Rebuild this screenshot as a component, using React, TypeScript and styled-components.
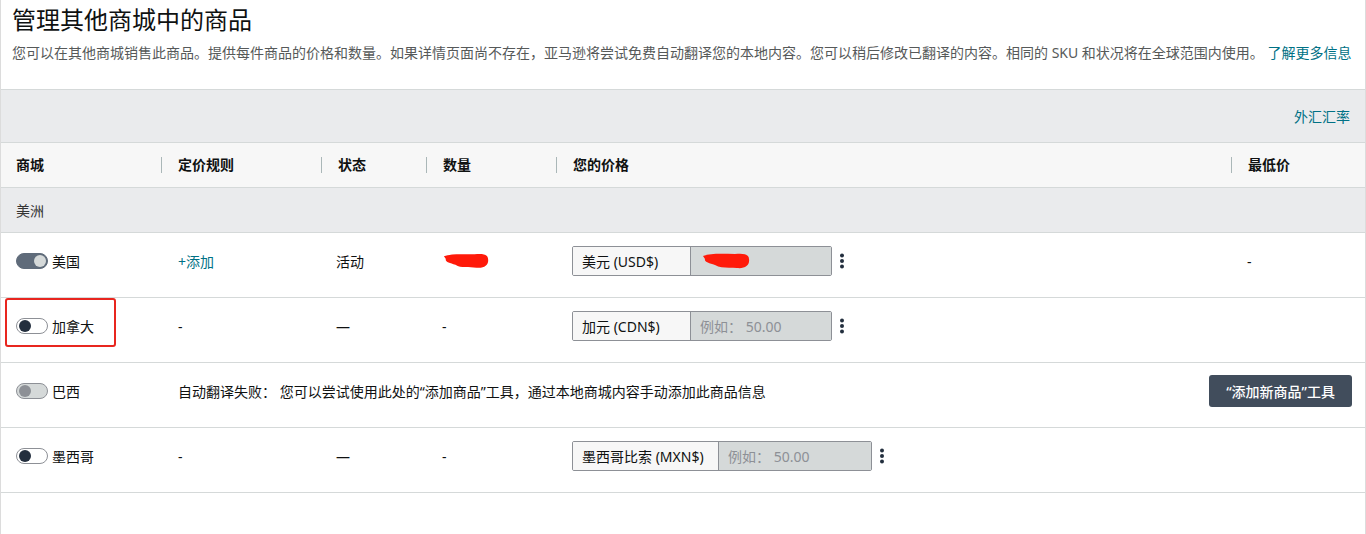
import styled, { createGlobalStyle } from "styled-components";

const GlobalStyle = createGlobalStyle`
  body {
    margin: 0;
    background: #fff;
    font-family: "Noto Sans", "Noto Sans CJK SC", sans-serif;
    color: #0f1111;
  }
`;

const COLS = "160px 160px 105px 130px 1fr 134px";

type Toggle = "on" | "off" | "disabled";

type Market = {
  name: string,
  toggle: Toggle,
  rule?: string,
  status?: string,
  qty?: string,
  currency?: string,
  leftW?: number,
  rightW?: number,
  redacted?: boolean,
  low?: string,
  failed?: boolean,
  flagged?: boolean,
};

const markets: Market[] = [
  { name: "美国", toggle: "on", rule: "+添加", status: "活动", currency: "美元 (USD$)", leftW: 118, rightW: 140, redacted: true, low: "-" },
  { name: "加拿大", toggle: "off", rule: "-", status: "—", qty: "-", currency: "加元 (CDN$)", leftW: 118, rightW: 140, flagged: true },
  { name: "巴西", toggle: "disabled", failed: true },
  { name: "墨西哥", toggle: "off", rule: "-", status: "—", qty: "-", currency: "墨西哥比索 (MXN$)", leftW: 146, rightW: 152 },
];

const Page = styled.div`
  min-height: 534px;
  border-left: 1px solid #dcdcdc;
  border-right: 1px solid #dcdcdc;
  box-sizing: border-box;
`;

const Intro = styled.div`
  padding: 5px 11px 0;
  height: 84px;
`;

const Title = styled.h1`
  margin: 0;
  font-size: 24px;
  line-height: 30px;
  font-weight: 400;
  color: #0f1111;
`;

const Lead = styled.p`
  margin: 8px 0 0;
  font-size: 14px;
  line-height: 20px;
  color: #565959;
  white-space: nowrap;
`;

const Link = styled.a`
  color: #007185;
  text-decoration: none;
  cursor: pointer;
`;

const RateBar = styled.div`
  display: flex;
  justify-content: flex-end;
  align-items: center;
  height: 52px;
  padding: 0 15px;
  background: #eaebed;
  border-top: 1px solid #d5d9d9;
  font-size: 14px;
`;

const HeadRow = styled.div`
  display: grid;
  grid-template-columns: ${COLS};
  height: 44px;
  align-items: center;
  background: #f7f7f7;
  border-top: 1px solid #d5d9d9;
`;

const HeadCell = styled.div<{ $sep?: boolean }>`
  font-size: 14px;
  font-weight: 700;
  line-height: 16px;
  color: #0f1111;
  padding-left: ${(p) => (p.$sep ? "16px" : "15px")};
  border-left: ${(p) => (p.$sep ? "1px solid #aab7b8" : "none")};
`;

const RegionRow = styled.div`
  display: flex;
  align-items: center;
  height: 44px;
  padding-left: 15px;
  background: #eaebed;
  border-top: 1px solid #d5d9d9;
  font-size: 14px;
  color: #333;
`;

const Row = styled.div`
  display: grid;
  grid-template-columns: ${COLS};
  height: 56px;
  padding-bottom: 8px;
  align-items: center;
  border-top: 1px solid #d5d9d9;
  font-size: 14px;
  &:last-child {
    border-bottom: 1px solid #d5d9d9;
  }
`;

const Cell = styled.div<{ $pad?: number }>`
  padding-left: ${(p) => p.$pad ?? 17}px;
  display: flex;
  align-items: center;
  color: #0f1111;
`;

const MarketCell = styled(Cell)`
  position: relative;
  gap: 4px;
  height: 100%;
`;

const Flag = styled.div`
  position: absolute;
  left: 4px;
  top: 0;
  width: 107px;
  height: 45px;
  border: 2px solid #e8261f;
  border-radius: 3px;
`;

const Switch = styled.span<{ $state: Toggle }>`
  position: relative;
  width: 32px;
  height: 16px;
  box-sizing: border-box;
  border-radius: 8px;
  flex-shrink: 0;
  border: 1px solid ${(p) => (p.$state === "on" ? "#5f6b7a" : "#8d9096")};
  background: ${(p) => (p.$state === "on" ? "#5f6b7a" : p.$state === "disabled" ? "#d5d9d9" : "#fff")};
  &::after {
    content: "";
    position: absolute;
    top: 1px;
    left: ${(p) => (p.$state === "on" ? "17px" : "2px")};
    width: 12px;
    height: 12px;
    border-radius: 50%;
    background: ${(p) => (p.$state === "on" ? "#d5d9d9" : p.$state === "disabled" ? "#8d9096" : "#232f3e")};
  }
`;

const FailRow = styled.div`
  grid-column: 2 / -1;
  display: flex;
  align-items: center;
  justify-content: space-between;
  padding: 0 13px 0 17px;
`;

const DarkButton = styled.button`
  height: 32px;
  padding: 0 17px;
  border: none;
  border-radius: 3px;
  background: #414d5c;
  color: #fff;
  font-family: inherit;
  font-size: 14px;
  font-weight: 500;
  cursor: pointer;
`;

const PriceGroup = styled.div`
  display: flex;
  align-items: center;
  gap: 7px;
  padding-left: 16px;
`;

const PriceBox = styled.div`
  display: flex;
  height: 30px;
  border: 1px solid #8d9096;
  border-radius: 2px;
  box-sizing: border-box;
  overflow: hidden;
`;

const Currency = styled.div<{ $w: number }>`
  width: ${(p) => p.$w}px;
  box-sizing: border-box;
  display: flex;
  align-items: center;
  padding-left: 9px;
  background: #f7f7f7;
  border-right: 1px solid #8d9096;
  color: #0f1111;
  white-space: nowrap;
`;

const Amount = styled.div<{ $w: number }>`
  width: ${(p) => p.$w}px;
  display: flex;
  align-items: center;
  padding-left: 9px;
  background: #d5d9d9;
  color: #8d9096;
  box-sizing: border-box;
`;

const Kebab = () => (
  <svg width="6" height="16" viewBox="0 0 6 16">
    <circle cx="3" cy="2.5" r="2" fill="#232f3e" />
    <circle cx="3" cy="8" r="2" fill="#232f3e" />
    <circle cx="3" cy="13.5" r="2" fill="#232f3e" />
  </svg>
);

const Scribble = ({ w }: { w: number }) => (
  <svg width={w} height="20" viewBox="0 0 50 20">
    <path
      d="M2 5 C10 2, 22 3, 34 3 C42 2, 48 3, 48 8 C49 14, 44 18, 36 17 C28 16, 20 18, 14 14 C8 12, 3 11, 4 8 Z"
      fill="#ff1a0a"
    />
  </svg>
);

export default function App() {
  return (
    <>
      <GlobalStyle />
      <Page>
        <Intro>
          <Title>管理其他商城中的商品</Title>
          <Lead>
            您可以在其他商城销售此商品。提供每件商品的价格和数量。如果详情页面尚不存在，亚马逊将尝试免费自动翻译您的本地内容。您可以稍后修改已翻译的内容。相同的 SKU 和状况将在全球范围内使用。{" "}
            <Link>了解更多信息</Link>
          </Lead>
        </Intro>
        <RateBar>
          <Link>外汇汇率</Link>
        </RateBar>
        <HeadRow>
          <HeadCell>商城</HeadCell>
          <HeadCell $sep>定价规则</HeadCell>
          <HeadCell $sep>状态</HeadCell>
          <HeadCell $sep>数量</HeadCell>
          <HeadCell $sep>您的价格</HeadCell>
          <HeadCell $sep>最低价</HeadCell>
        </HeadRow>
        <RegionRow>美洲</RegionRow>
        <div>
          {markets.map((m) => (
            <Row key={m.name}>
              <MarketCell $pad={15}>
                {m.flagged && <Flag />}
                <Switch $state={m.toggle} />
                {m.name}
              </MarketCell>
              {m.failed ? (
                <FailRow>
                  <span>自动翻译失败： 您可以尝试使用此处的“添加商品”工具，通过本地商城内容手动添加此商品信息</span>
                  <DarkButton>“添加新商品”工具</DarkButton>
                </FailRow>
              ) : (
                <>
                  <Cell>{m.rule === "+添加" ? <Link>{m.rule}</Link> : m.rule}</Cell>
                  <Cell $pad={15}>{m.status}</Cell>
                  <Cell $pad={16}>{m.redacted ? <Scribble w={48} /> : m.qty}</Cell>
                  <PriceGroup>
                    <PriceBox>
                      <Currency $w={m.leftW ?? 118}>{m.currency}</Currency>
                      <Amount $w={m.rightW ?? 140}>
                        {m.redacted ? <Scribble w={52} /> : "例如： 50.00"}
                      </Amount>
                    </PriceBox>
                    <Kebab />
                  </PriceGroup>
                  <Cell $pad={16}>{m.low}</Cell>
                </>
              )}
            </Row>
          ))}
        </div>
      </Page>
    </>
  );
}
